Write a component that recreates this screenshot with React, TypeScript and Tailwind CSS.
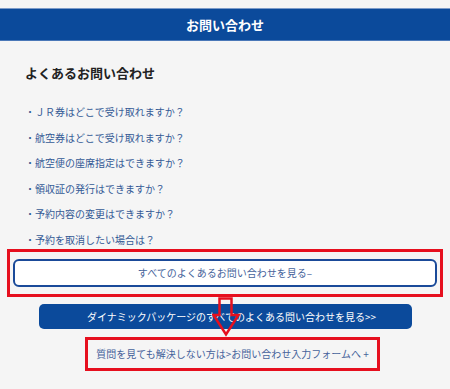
import React from 'react';

const faqs: string[] = [
  '・ＪＲ券はどこで受け取れますか？',
  '・航空券はどこで受け取れますか？',
  '・航空便の座席指定はできますか？',
  '・領収証の発行はできますか？',
  '・予約内容の変更はできますか？',
  '・予約を取消したい場合は？',
];

const App: React.FC = () => {
  return (
    <main
      className="relative min-h-screen bg-[#f5f5f5] pt-2"
      style={{ fontFamily: '"Noto Sans CJK JP", "Noto Sans", sans-serif' }}
    >
      <header className="flex h-[33px] items-center justify-center border-t border-b border-t-[#7c9bc9] border-b-[#4a78b8] bg-[#0b4a9b] text-[13px] font-bold text-white">
        お問い合わせ
      </header>

      <h2 className="pl-[25px] pt-[23px] text-[13px] font-bold leading-[18px] text-[#222]">
        よくあるお問い合わせ
      </h2>

      <ul className="mt-[23px] flex flex-col gap-[11.6px] pl-[25px]">
        {faqs.map((q, i) => (
          <li key={i} className="text-[10px] leading-[14px] text-[#345a96]">
            {q}
          </li>
        ))}
      </ul>

      <div className="mx-[7px] mt-[2px] border-[3px] border-[#e60f1e] px-[3px] py-[7px]">
        <button className="flex h-[28px] w-full items-center justify-center rounded-[6px] border-2 border-[#1a4a99] bg-white text-[10px] text-[#46639b]">
          すべてのよくあるお問い合わせを見る–
        </button>
      </div>

      <button className="mx-[39px] mt-[7px] flex h-[25px] w-[373px] items-center justify-center rounded-[5px] bg-[#0b4a9b] pl-3 text-[10px] text-white">
        ダイナミックパッケージのすべてのよくある問い合わせを見る&gt;&gt;
      </button>

      <div className="ml-[85px] mt-[8px] flex h-[34px] w-[295px] items-center justify-center border-[3px] border-[#e60f1e] text-[10px] text-[#46639b]">
        質問を見ても解決しない方は&gt;お問い合わせ入力フォームへ +
      </div>

      <svg
        className="absolute left-[212px] top-[297px]"
        width="30"
        height="40"
        viewBox="0 0 30 40"
        fill="none"
      >
        <polygon
          points="7.5,1.5 19.5,1.5 19.5,18 26.5,18 14,37.5 1.5,18 7.5,18"
          stroke="#e60f1e"
          strokeWidth="2.5"
          strokeLinejoin="miter"
        />
      </svg>
    </main>
  );
};

export default App;
